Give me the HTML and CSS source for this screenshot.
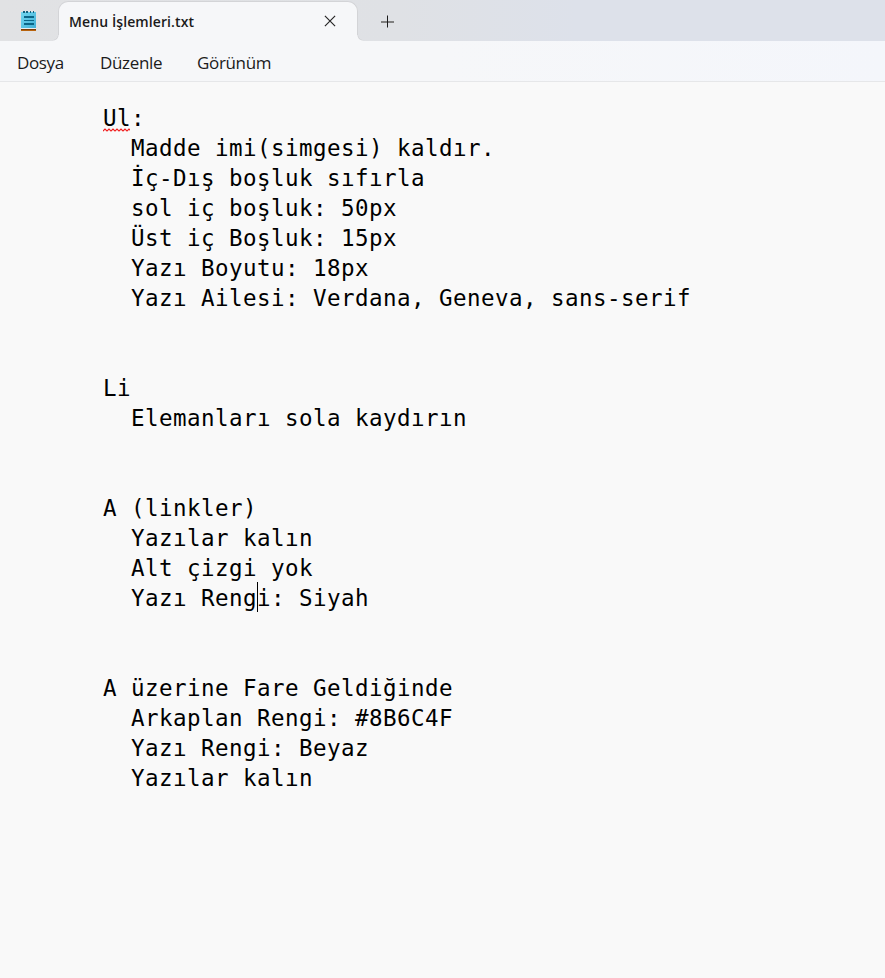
FILE: index.html
```html
<!DOCTYPE html>
<html lang="tr">
<head>
<meta charset="utf-8">
<title>Menu İşlemleri.txt</title>
<link rel="stylesheet" href="styles.css">
</head>
<body>
<header class="titlebar">
  <svg class="app-icon" width="16" height="20" viewBox="0 0 16 20">
    <defs><linearGradient id="paper" x1="0" y1="0" x2="1" y2="1"><stop offset="0" stop-color="#72d8f1"/><stop offset="1" stop-color="#43b0d6"/></linearGradient></defs>
    <path fill="#b8640f" d="M0 17h15v3H0z"/>
    <path fill="#7a3d08" d="M0 18h15v1H0z"/>
    <path fill="#e8eef1" d="M0 17h15v1H0z"/>
    <path fill="url(#paper)" d="M0 1h15v16H0z"/>
    <path fill="#14627f" d="M2 0h2v2H2zM5 0h2v2H5zM9 0h1v2H9zM12 0h1v2h-1z"/>
    <path fill="#0b6687" d="M3 5h10v2H3zM3 9h10v1H3zM3 12h10v2H3z"/>
  </svg>
  <div class="tab">
    <span class="tab-title">Menu İşlemleri.txt</span>
    <svg class="close" width="12" height="12" viewBox="0 0 12 12"><path d="M.9.900l10.200 10.200M11.100.900L.9 11.100" stroke="#252525" stroke-width="1.150" fill="none"/></svg>
  </div>
  <svg class="plus" width="13" height="13" viewBox="0 0 13 13"><path d="M0 7h13" stroke="#808080" stroke-width="2"/><path d="M6.500 .5v12" stroke="#1c1c1c"/></svg>
</header>
<nav class="menu"><span class="m1">Dosya</span><span class="m2">Düzenle</span><span class="m3">Görünüm</span></nav>
<main class="editor"><span class="misspelled">Ul</span>:
  Madde imi(simgesi) kaldır.
  İç-Dış boşluk sıfırla
  sol iç boşluk: 50px
  Üst iç Boşluk: 15px
  Yazı Boyutu: 18px
  Yazı Ailesi: Verdana, Geneva, sans-serif


Li
  Elemanları sola kaydırın


A (linkler)
  Yazılar kalın
  Alt çizgi yok
  <span class="current">Yazı Rengi: Siyah</span>


A üzerine Fare Geldiğinde
  Arkaplan Rengi: #8B6C4F
  Yazı Rengi: Beyaz
  Yazılar kalın
</main>
</body>
</html>
```
FILE: styles.css
```css
* { box-sizing: border-box; }
body {
  margin: 0;
  height: 978px;
  overflow: hidden;
  background: #f9f9f9;
  color: #1b1b1b;
  font-family: "Open Sans", "Noto Sans", sans-serif;
}
.titlebar {
  display: flex;
  height: 41px;
  background: linear-gradient(90deg, #e1e2e4 0, #dfe1e5 45%, #dde1ea 65%, #dde1ea 100%);
}
.app-icon { margin: 11px 0 0 21px; }
.tab {
  position: relative;
  display: flex;
  align-items: center;
  justify-content: space-between;
  width: 300px;
  height: 40px;
  margin: 1px 0 0 21px;
  padding: 0 21px 2px 10px;
  background: #f6f7f9;
  border: 1px solid #d3d4d7;
  border-bottom: 0;
  border-radius: 10px 10px 0 0;
}
.tab::before,
.tab::after {
  content: "";
  position: absolute;
  bottom: 0;
  width: 6px;
  height: 6px;
}
.tab::before {
  left: -6px;
  background: radial-gradient(circle at 0 0, transparent 4.5px, #d3d4d7 5px, #f6f7f9 6px);
}
.tab::after {
  right: -6px;
  background: radial-gradient(circle at 100% 0, transparent 4.5px, #d3d4d7 5px, #f6f7f9 6px);
}
.tab-title {
  font-size: 14px;
  font-weight: 600;
  letter-spacing: 0.1px;
  line-height: 20px;
  padding-top: 2px;
  white-space: nowrap;
}
.plus { margin: 15px 0 0 23px; }
.menu {
  display: flex;
  height: 41px;
  padding-left: 17px;
  background: linear-gradient(90deg, #f6f7f9 0, #f6f7f9 50%, #f4f6fb 100%);
  border-bottom: 1px solid #e6e7e9;
  font-size: 17px;
  letter-spacing: -0.35px;
  line-height: 43px;
}
.m1 { width: 83px; }
.m2 { width: 97px; }
.editor {
  padding: 21px 0 0 103px;
  color: #000;
  font-family: "DejaVu Sans Mono", monospace;
  font-size: 22.5px;
  letter-spacing: 0.454px;
  line-height: 30px;
  white-space: pre;
}
.misspelled { position: relative; }
.misspelled::after {
  content: "";
  position: absolute;
  left: 0;
  bottom: -1px;
  width: 27px;
  height: 4px;
  background: url("data:image/svg+xml,%3Csvg xmlns='http://www.w3.org/2000/svg' width='4' height='4'%3E%3Cpath d='M-1 2l1 1 2-2 2 2 1-1' fill='none' stroke='%23f01818' stroke-width='1.2'/%3E%3C/svg%3E") repeat-x;
}
.current { position: relative; }
.current::after {
  content: "";
  position: absolute;
  left: 126px;
  bottom: -1px;
  width: 1px;
  height: 30px;
  background: #000;
}
```
